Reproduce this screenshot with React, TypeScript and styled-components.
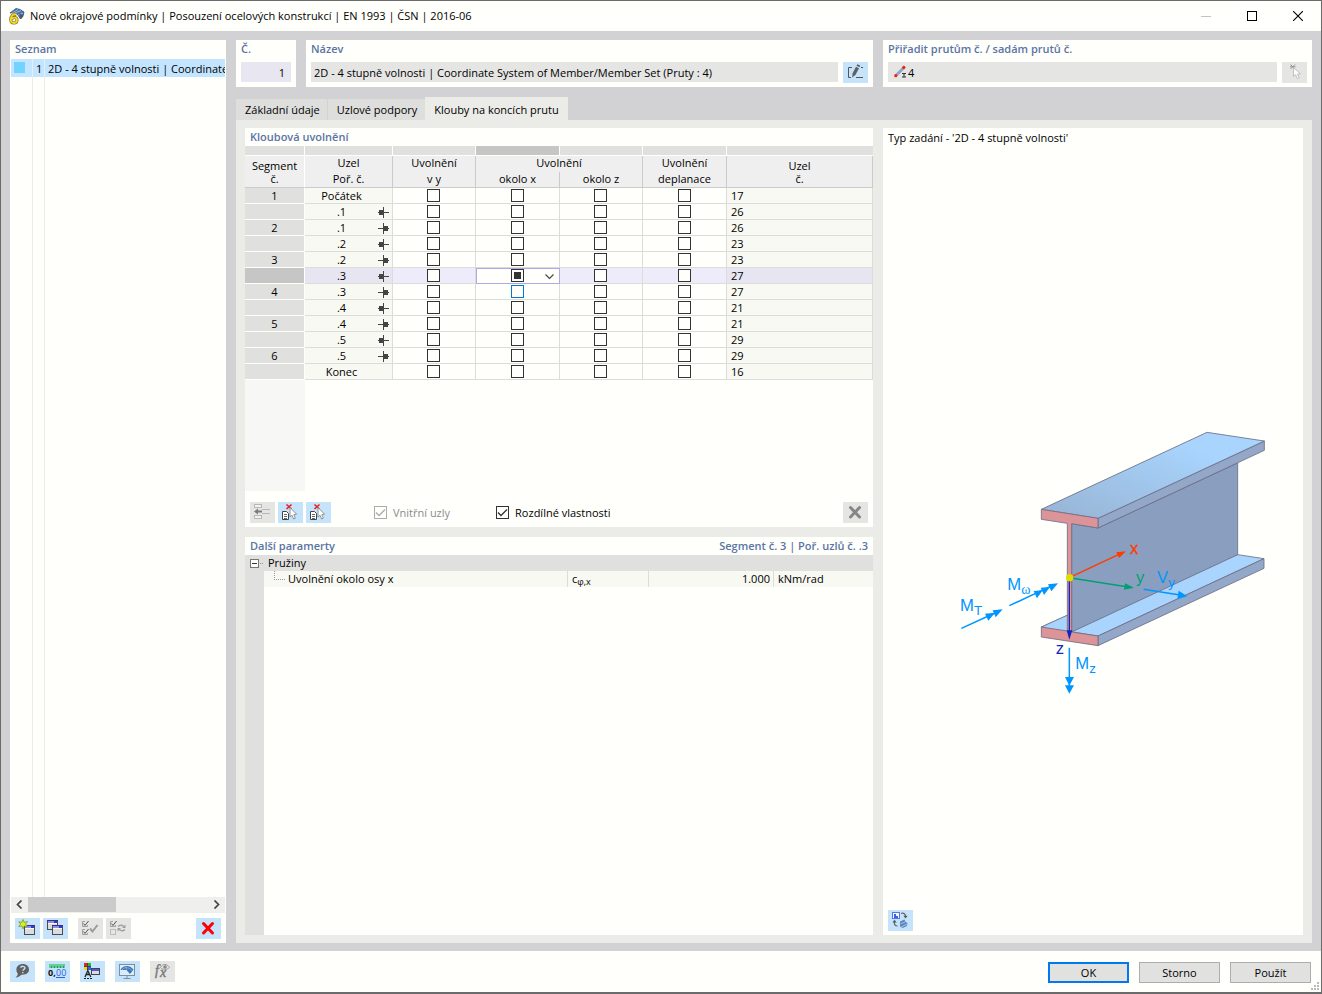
import React from 'react';
import styled, { createGlobalStyle, css } from 'styled-components';

const c = {
  white: '#fffffc',
  frame: '#6b6b6b',
  body: '#d2d2d5',
  page: '#ebece8',
  tab: '#dededd',
  head: '#efefef',
  strip: '#e0e0df',
  line: '#dcdcd8',
  headLine: '#cbcbcb',
  readOnly: '#f8f9f2',
  title: '#5a74a4',
  blue: '#c5e3fa',
  grey: '#e5e5e4',
  text: '#000000',
};

const Global = createGlobalStyle`
  * { box-sizing: border-box; }
  body { margin: 0; background: ${c.frame}; }
  body, button, input, table {
    font-family: "Open Sans", "Noto Sans", sans-serif;
    font-size: 11px;
    line-height: 16px;
    color: ${c.text};
  }
`;

const Window = styled.div`
  display: flex;
  flex-direction: column;
  min-height: 100vh;
  border: 1px solid ${c.frame};
  border-bottom-width: 2px;
  background: ${c.white};
`;

const TitleBar = styled.header`
  display: flex;
  align-items: center;
  height: 30px;
  padding-left: 7px;
`;

const WindowTitle = styled.h1`
  flex: 1;
  margin: 0 0 0 5px;
  font-size: 11px;
  font-weight: 400;
  white-space: nowrap;
`;

const CaptionButton = styled.button`
  display: grid;
  place-items: center;
  width: 46px;
  height: 29px;
  padding: 0;
  border: 0;
  background: none;
`;

const Main = styled.main`
  flex: 1;
  display: grid;
  grid-template-columns: 216px minmax(0, 1fr);
  column-gap: 10px;
  padding: 9px 9px 8px;
  background: ${c.body};
`;

const Panel = styled.section`
  display: flex;
  flex-direction: column;
  min-width: 0;
  background: ${c.white};
`;

const PanelHead = styled.div<{ $tall?: boolean }>`
  display: flex;
  justify-content: space-between;
  height: ${p => (p.$tall ? 19 : 18)}px;
  padding: 1px 5px;
`;

const PanelTitle = styled.h2`
  margin: 0;
  font-size: 11px;
  font-weight: 600;
  color: ${c.title};
  white-space: nowrap;
`;

const ListBody = styled.ul`
  flex: 1;
  margin: 0 1px;
  padding: 0;
  list-style: none;
  background: linear-gradient(${c.page}, ${c.page}) 21px 0 / 1px 100% no-repeat,
    linear-gradient(${c.page}, ${c.page}) 33px 0 / 1px 100% no-repeat;
`;

const ListRow = styled.li`
  display: grid;
  grid-template-columns: 22px 12px minmax(0, 1fr);
  height: 18px;
  line-height: 20px;
  background: #c3e5ff;
`;

const ListCell = styled.span`
  padding-left: 3px;
  overflow: hidden;
  white-space: nowrap;
  &:not(:last-child) { border-right: 1px solid #e3eff6; }
`;

const Swatch = styled.i`
  display: block;
  width: 11px;
  height: 11px;
  margin-top: 3px;
  background: #72d3ff;
`;

const ScrollBar = styled.div`
  display: grid;
  grid-template-columns: 17px minmax(0, 1fr) 17px;
  height: 16px;
  margin: 0 1px;
  background: #efefee;
`;

const ScrollArrow = styled.button`
  display: grid;
  place-items: center;
  padding: 0 0 1px;
  border: 0;
  background: none;
`;

const ScrollThumb = styled.div`
  width: 49%;
  height: 15px;
  background: #cbcbcb;
`;

const ToolRow = styled.div<{ $list?: boolean }>`
  display: flex;
  align-items: center;
  gap: 3px;
  padding: ${p => (p.$list ? 5 : 11)}px 5px 4px;
`;

const Spacer = styled.span<{ $w?: number }>`
  ${p => (p.$w ? css`width: ${p.$w}px;` : css`flex: 1;`)}
`;

const IconButton = styled.button<{ $off?: boolean }>`
  display: block;
  flex: none;
  width: 25px;
  height: 21px;
  padding: 0;
  border: 0;
  background: ${p => (p.$off ? c.grey : c.blue)};
  svg { display: block; }
`;

const Detail = styled.div`
  display: flex;
  flex-direction: column;
  min-width: 0;
`;

const Fields = styled.div`
  display: grid;
  grid-template-columns: 60px minmax(0, 1fr) 429px;
  gap: 10px;
`;

const FieldPanel = styled.div`
  height: 47px;
  padding: 1px 5px 4px;
  background: ${c.white};
`;

const FieldLabel = styled.label`
  display: block;
  height: 21px;
  font-weight: 600;
  color: ${c.title};
`;

const FieldRow = styled.div`
  display: flex;
  gap: 5px;
`;

const FieldBox = styled.div<{ $tint?: boolean }>`
  flex: 1;
  display: flex;
  align-items: center;
  min-width: 0;
  height: 20px;
  padding: 0 3px;
  background: ${p => (p.$tint ? '#e8e6f1' : c.grey)};
`;

const TextInput = styled.input<{ $right?: boolean }>`
  flex: 1;
  min-width: 0;
  padding: 2px 3px 0 0;
  border: 0;
  outline: 0;
  background: none;
  text-align: ${p => (p.$right ? 'right' : 'left')};
`;

const Tabs = styled.div`
  display: flex;
  align-items: flex-end;
  margin-top: 10px;
`;

const Tab = styled.button<{ $active?: boolean }>`
  height: ${p => (p.$active ? 23 : 21)}px;
  padding: ${p => (p.$active ? '3px 9px 0' : '0 8px 0 9px')};
  border: 0;
  background: ${p => (p.$active ? c.page : c.tab)};
  white-space: nowrap;
  &:first-child { border-right: 1px solid ${c.body}; padding-right: 7px; }
`;

const TabPage = styled.div`
  flex: 1;
  display: grid;
  grid-template-columns: minmax(0, 1fr) 420px;
  gap: 10px;
  padding: 8px 9px;
  background: ${c.page};
`;

const Stack = styled.div`
  display: grid;
  grid-template-rows: auto minmax(0, 1fr);
  gap: 10px;
  min-width: 0;
`;

const HingeArea = styled.div`
  min-height: 345px;
  background: linear-gradient(#f7f7f5, #f7f7f5) 0 0 / 60px 100% no-repeat;
`;

const HingeTable = styled.table`
  width: 100%;
  table-layout: fixed;
  border-collapse: separate;
  border-spacing: 0;
  text-align: center;
  background: ${c.white};
`;

const StripCell = styled.td<{ $on?: boolean }>`
  height: 10px;
  padding: 0;
  border-right: 1px solid ${c.white};
  border-bottom: 1px solid ${c.white};
  background: ${p => (p.$on ? '#c6c6c6' : c.strip)};
  &:last-child { border-right: 0; }
`;

const HeadCell = styled.th<{ $base?: boolean; $first?: boolean }>`
  height: 16px;
  padding: 0;
  font-weight: 400;
  line-height: ${p => (p.rowSpan === 2 ? 13 : 14)}px;
  vertical-align: ${p => (p.rowSpan === 2 ? 'middle' : 'top')};
  background: ${c.head};
  border-right: 1px solid ${c.headLine};
  border-bottom: ${p => (p.$base ? `1px solid ${c.headLine}` : 0)};
  ${p => p.$first && css`border-right-color: ${c.white};`}
`;

const Cell = styled.td<{ $ro?: boolean; $sel?: boolean; $left?: boolean; $check?: boolean }>`
  height: 16px;
  padding: 0 ${p => (p.$check ? 1 : 0)}px 0 ${p => (p.$left ? 4 : 0)}px;
  line-height: 15px;
  text-align: ${p => (p.$left ? 'left' : 'center')};
  border-right: 1px solid ${c.line};
  border-bottom: 1px solid ${c.line};
  background: ${p =>
    p.$sel ? (p.$ro ? '#e7e5f1' : '#eeebfb') : p.$ro ? c.readOnly : c.white};
`;

const SegmentCell = styled.th<{ $sel?: boolean }>`
  height: 16px;
  padding: 0;
  font-weight: 400;
  line-height: 15px;
  border-right: 1px solid ${c.white};
  border-bottom: 1px solid ${c.white};
  background: ${p => (p.$sel ? '#c6c6c6' : c.strip)};
`;

const EditCell = styled(Cell)`
  border: 1px solid #b3a5e6;
  background: ${c.white};
`;

const EditLayout = styled.div`
  display: grid;
  grid-template-columns: minmax(0, 1fr) 13px minmax(0, 1fr);
  height: 14px;
`;

const DropButton = styled.button`
  display: grid;
  place-items: center;
  justify-self: end;
  width: 17px;
  height: 14px;
  padding: 0;
  border: 0;
  background: none;
`;

const NodeLayout = styled.div`
  display: grid;
  grid-template-columns: minmax(0, 1fr) 14px;
  height: 15px;
  svg { margin-top: 3px; }
`;

const Check = styled.input<{ $hot?: boolean; $mixed?: boolean }>`
  appearance: none;
  display: block;
  flex: none;
  width: 13px;
  height: 13px;
  margin: 0 auto;
  border: 1px solid ${p => (p.$hot ? '#0078d7' : '#333333')};
  background: ${p => (p.$mixed ? '#333333' : c.white)};
  ${p => p.$mixed && css`box-shadow: inset 0 0 0 2px ${c.white};`}
  &:checked {
    background: ${c.white}
      url("data:image/svg+xml,%3Csvg xmlns='http://www.w3.org/2000/svg' width='11' height='11'%3E%3Cpath d='M1 5.5 L4 8.5 L10 2.5' fill='none' stroke='%23333' stroke-width='1.3'/%3E%3C/svg%3E");
  }
  &:disabled { opacity: 0.4; }
`;

const CheckLabel = styled.label<{ $off?: boolean }>`
  display: flex;
  align-items: center;
  gap: 6px;
  color: ${p => (p.$off ? '#8c8c8c' : c.text)};
  white-space: nowrap;
`;

const ParamArea = styled.div`
  flex: 1;
  background: linear-gradient(${c.strip}, ${c.strip}) 0 0 / 19px 100% no-repeat;
`;

const ParamTable = styled.table`
  width: 100%;
  table-layout: fixed;
  border-collapse: separate;
  border-spacing: 0;
`;

const ParamCell = styled.td<{ $group?: boolean; $gutter?: boolean; $right?: boolean }>`
  height: 16px;
  padding: 0 ${p => (p.$right ? 3 : 4)}px 0 4px;
  line-height: 16px;
  white-space: nowrap;
  text-align: ${p => (p.$right ? 'right' : 'left')};
  background: ${p => (p.$group || p.$gutter ? c.strip : c.readOnly)};
  border-right: ${p => (p.$group || p.$gutter ? 0 : `1px solid ${c.line}`)};
  &:last-child { border-right: 0; }
`;

const TreeItem = styled.span<{ $leaf?: boolean }>`
  display: flex;
  align-items: center;
  gap: ${p => (p.$leaf ? 3 : 0)}px;
  padding-left: ${p => (p.$leaf ? 5 : 1)}px;
  height: 16px;
`;

const ToggleButton = styled.button`
  display: block;
  height: 9px;
  padding: 0;
  margin-right: 4px;
  border: 0;
  background: none;
  svg { display: block; }
`;

const SymbolText = styled.span`
  sub { font-size: 9px; line-height: 1; vertical-align: -2px; }
`;

const PreviewText = styled.p`
  margin: 0;
  padding: 2px 5px 4px;
`;

const PreviewCanvas = styled.div`
  flex: 1;
  display: grid;
  place-items: center;
  padding-top: 80px;
`;

const Footer = styled.footer`
  display: flex;
  align-items: flex-start;
  gap: 10px;
  height: 41px;
  padding: 10px 1px 0 9px;
`;

const DialogButton = styled.button<{ $primary?: boolean }>`
  width: 81px;
  height: 21px;
  margin-top: 1px;
  padding: 0;
  border: ${p => (p.$primary ? '2px solid #0078f0' : '1px solid #adadad')};
  background: #e1e1e0;
`;

const GripSlot = styled.span`
  align-self: flex-end;
  width: 9px;
  height: 9px;
  margin: 0 0 1px -10px;
  svg { display: block; }
`;

const AppIcon = () => (
  <svg width="17" height="17" viewBox="0 0 17 17">
    <path d="M2 5 L8 0.5 L12 1.5 L16 4 L15 8 L12.5 11 L8 4 Z" fill="#4a76b8" stroke="#2f4a78" strokeWidth="0.8" />
    <path d="M4 5 L10 1.5 M7 5 L13 2.5 M10 7 L15 5" stroke="#a9c4ea" strokeWidth="0.8" />
    <path d="M11 5 L15.5 8 L13 11 Z" fill="#555" />
    <path d="M8.5 6.5 C5 5.5 2.8 8 2.8 11.5 C2.8 14 4 15 5.8 15 C8 15 9 13.6 9 12 C9 10.4 8 9.6 6.5 9.6 C5 9.6 4 10.4 3.6 11.4" fill="none" stroke="#7b6a10" strokeWidth="3" />
    <path d="M8.5 6.5 C5 5.5 2.8 8 2.8 11.5 C2.8 14 4 15 5.8 15 C8 15 9 13.6 9 12 C9 10.4 8 9.6 6.5 9.6 C5 9.6 4 10.4 3.6 11.4" fill="none" stroke="#efd92c" strokeWidth="1.8" />
  </svg>
);

const Svg = ({ children }: { children: React.ReactNode }) => (
  <svg width="25" height="21" viewBox="0 0 25 21">{children}</svg>
);

const MiniWindow = ({ x, y }: { x: number; y: number }) => (
  <g>
    <rect x={x + 0.5} y={y + 0.5} width="10" height="9" fill="#dcdcdc" stroke="#4b4b4b" />
    <rect x={x + 1} y={y + 3} width="9" height="1" fill="#fafafa" />
    <rect x={x} y={y} width="11" height="1" fill="#33337a" />
    <rect x={x + 1} y={y + 1} width="6" height="2" fill="#8c8cf4" />
    <rect x={x + 7} y={y + 1} width="3" height="2" fill="#3434e0" />
  </g>
);

const NewIcon = () => (
  <Svg>
    <MiniWindow x={9} y={7} />
    <path d="M8 1.5 L9.2 4.3 L12.6 3.6 L10.6 6 L12.6 8.4 L9.2 8 L8 11 L6.9 8 L3.8 8.6 L5.6 6 L3.8 3.8 L6.9 4.3 Z" fill="#d9ee1c" stroke="#6f8f28" strokeWidth="0.7" />
  </Svg>
);
const CopyIcon = () => (<Svg><MiniWindow x={4} y={2} /><MiniWindow x={9} y={7} /></Svg>);

const CheckAllIcon = () => (
  <Svg>
    <g fill="none" stroke="#a0a0a0">
      <path d="M7 3.5 H4.5 V8.5 H9.5 V7" />
      <path d="M7 11.5 H4.5 V16.5 H9.5 V15" />
      <path d="M5.5 5.5 L7 7.5 L10.5 3 M5.5 13.5 L7 15.5 L10.5 11" stroke="#555" />
      <path d="M12 10.5 L14.5 13.5 L19.5 7" stroke="#9b9b9b" strokeWidth="2" />
    </g>
  </Svg>
);
const CheckSwapIcon = () => (
  <Svg>
    <g fill="none" stroke="#a0a0a0">
      <path d="M7 3.5 H4.5 V8.5 H9.5 V7" />
      <path d="M5.5 5.5 L7 7.5 L10.5 3" stroke="#555" />
      <rect x="4.5" y="11.5" width="5" height="5" stroke="#bcbcbc" />
      <path d="M12 8.5 C14 6.5 16 7 18 8.5 M19 11.5 C17 13.5 15 13 13 11.5" stroke="#a0a0a0" strokeWidth="1.5" />
    </g>
    <path d="M19.5 6.5 V10 H16 Z M11.5 13.5 V10 H15 Z" fill="#a0a0a0" />
  </Svg>
);
const CrossIcon = ({ color }: { color: string }) => (
  <Svg>
    <path d="M7.5 5.5 L16.5 15 M16.5 5.5 L7.5 15" stroke={color} strokeWidth="3" strokeLinecap="round" />
  </Svg>
);
const HelpIcon = () => (
  <Svg>
    <path d="M12.8 3 C16.6 3 19 5.4 19 8.6 C19 11.8 16.4 13.8 12.6 13.8 L11.3 13.8 C10 15.2 8.5 16.4 5.5 16.6 C7.2 15.4 7.6 14.3 7.8 12.6 C6.8 11.6 6.4 10.2 6.4 8.6 C6.4 5.4 9 3 12.8 3 Z" fill="#606060" />
    <path d="M10.7 6.8 C10.9 4.8 15 4.8 14.9 7 C14.9 8.3 13 8.4 12.9 9.7 M12.8 11 V12.2" fill="none" stroke="#c5e3fa" strokeWidth="1.4" />
  </Svg>
);
const UnitsIcon = () => (
  <Svg>
    <rect x="4" y="3" width="16" height="4" fill="#62d093" />
    <path d="M6.5 5 V7 M9.5 5 V7 M12.5 5 V7 M15.5 5 V7 M18.5 5 V7" stroke="#2e8f5c" />
    <text x="3" y="15" fontFamily="Open Sans, sans-serif" fontSize="9" fontWeight="700" fill="#111">0,</text>
    <text x="11" y="15" fontFamily="Open Sans, sans-serif" fontSize="9" fill="#2f5fe0">00</text>
    <path d="M11 16.5 H20" stroke="#2f5fe0" />
  </Svg>
);
const DisplayIcon = () => (
  <Svg>
    <rect x="4" y="2" width="7" height="7" fill="#444" />
    <rect x="4" y="2" width="3" height="3" fill="#f02020" />
    <rect x="8" y="2" width="3" height="3" fill="#20c020" />
    <rect x="4" y="6" width="3" height="3" fill="#f0d020" />
    <rect x="8" y="6" width="3" height="3" fill="#3060f0" />
    <path d="M5 16 L7.8 9.5 L10.8 16 M6 13.5 H10" fill="none" stroke="#222" strokeWidth="1.3" />
    <path d="M4 17.5 H12" stroke="#222" strokeDasharray="2 1" />
    <rect x="11.5" y="7.5" width="8" height="6" fill="#dcdcdc" stroke="#444" />
    <rect x="12" y="8" width="7" height="2" fill="#5252ee" />
  </Svg>
);
const MonitorIcon = () => (
  <Svg>
    <rect x="4.5" y="3.5" width="15" height="11" fill="#d8ecfb" stroke="#7d8f9c" />
    <path d="M5.5 9 C7.5 4.5 14 3 18.5 8.5 L15 13 L11.5 9 Z" fill="#3f74b5" />
    <path d="M7 9 C9 6 13 5.5 17 9.5 M12 9 L10.5 5.5" fill="none" stroke="#9bc0e6" strokeWidth="0.7" />
    <path d="M12 14.5 V17 M8.5 17.5 H15.5" stroke="#7d8f9c" />
  </Svg>
);
const FormulaIcon = () => (
  <Svg>
    <text x="5" y="14" fontFamily="Liberation Serif, serif" fontStyle="italic" fontSize="14" fill="#777" stroke="#777" strokeWidth="0.4">f</text>
    <text x="10" y="16" fontFamily="Liberation Serif, serif" fontStyle="italic" fontSize="14" fill="#777" stroke="#777" strokeWidth="0.4">x</text>
    <path d="M10.5 6.5 C12.5 2.5 17 2.5 19.5 6.5 C17 9 12.5 9 10.5 6.5 Z" fill="none" stroke="#999" />
    <circle cx="15" cy="6" r="1.8" fill="#888" />
  </Svg>
);
const EditIcon = () => (
  <Svg>
    <path d="M9 5.5 H5.5 V15.5 H8 M18 5.5 H20 M13 15.5 H20" fill="none" stroke="#555" />
    <path d="M9.6 11.2 L13 4.8 L16 6.2 L12.6 12.8 L9.2 15.4 Z" fill="#606060" />
    <path d="M13.5 3.8 L14.4 2.2 L17.2 3.6 L16.5 5.2 Z" fill="#606060" />
  </Svg>
);
const PickIcon = () => (
  <Svg>
    <path d="M8.5 2.5 L13 7 M13 2.5 L8.5 7 M8 4.7 H13.5" stroke="#8f8f8f" strokeWidth="0.9" />
    <path d="M11.5 5.5 V14.5 L13.6 12.8 L15.4 16.6 L17.3 15.8 L15.5 12 L18.4 11.8 Z" fill="#fbfbfb" stroke="#b5b5b5" strokeWidth="0.8" />
  </Svg>
);
const DeletePickIcon = () => (
  <Svg>
    <path d="M4.5 9.5 H8.5 L10.5 11.5 V17.5 H4.5 Z" fill="#fff" stroke="#444" />
    <path d="M6 12.5 H9 M6 14.5 H9 M6 16.5 H9" stroke="#666" />
    <path d="M8.5 2.5 L13.5 7 M13.5 2.5 L8.5 7" stroke="#f01818" strokeWidth="1.5" />
    <path d="M12 5.5 V15 L14 13.2 L15.6 17 L17.4 16.2 L15.8 12.6 L18.6 12.2 Z" fill="#fdfdfd" stroke="#8a8a8a" strokeWidth="0.9" />
  </Svg>
);
const InsertRowIcon = () => (
  <Svg>
    <g fill="none" stroke="#b8b8b8">
      <rect x="4.5" y="2.5" width="7" height="3" fill="#f2f2f2" />
      <rect x="4.5" y="13.5" width="7" height="3" fill="#f2f2f2" />
      <path d="M12 7.5 H20 M12 11.5 H20" />
    </g>
    <path d="M4 9.5 L8 6.5 V8.5 H12 V10.5 H8 V12.5 Z" fill="#7c7c7c" />
  </Svg>
);
const ViewSwapIcon = () => (
  <Svg>
    <rect x="4.5" y="2.5" width="7" height="6" fill="#f4f8ff" stroke="#5377ee" />
    <path d="M6 4 H8 V6 H10 V8 H6 Z" fill="#3f62e0" />
    <path d="M13 3.5 C16 2.5 17.5 4 17.5 6.5 M6.5 11.5 C6 14.5 7 16 9.5 16" fill="none" stroke="#666" strokeWidth="1.2" />
    <path d="M15.4 5.8 H19.6 L17.5 8.4 Z M4.5 12.5 H8.7 L6.5 9.8 Z" fill="#555" />
    <path d="M12 11.5 L16.5 9.5 L17.5 12 L19.5 13 L19 16 L14.5 18 L12 16.5 Z" fill="#5a86bf" />
    <path d="M12.5 13.8 L17 12 M13 17 L19 14.2" stroke="#b7d2f0" strokeWidth="0.8" />
  </Svg>
);
const MemberIcon = () => (
  <svg width="14" height="14" viewBox="0 0 14 14">
    <path d="M2.5 10 L9.5 3" stroke="#8fa6c8" strokeWidth="3" />
    <circle cx="1.8" cy="10.7" r="1.6" fill="#f02010" />
    <circle cx="9.8" cy="2.4" r="1.6" fill="#f02010" />
    <path d="M8 8.5 H12 M10 8.5 V12 M8 12 H12" stroke="#333" strokeWidth="1.1" />
  </svg>
);

const NodeIcon = ({ side }: { side: 'L' | 'R' }) => (
  <svg width="11" height="11" viewBox="0 0 11 11">
    <path d="M5.5 0 V11 M0 5.5 H11" stroke="#444" />
    <rect x={side === 'L' ? 1 : 5} y="3" width="5" height="5" fill="#444" />
  </svg>
);

const Chevron = ({ d, thin }: { d: string; thin?: boolean }) => (
  <svg width="9" height="9" viewBox="0 0 9 9">
    <path d={d} fill="none" stroke="#444" strokeWidth={thin ? 1.1 : 1.7} />
  </svg>
);

const Grip = () => (
  <svg width="9" height="9" viewBox="0 0 9 9" fill="#b9b9b9">
    <path d="M6 0h2v2h-2z M3 3h2v2h-2z M6 3h2v2h-2z M0 6h2v2h-2z M3 6h2v2h-2z M6 6h2v2h-2z" />
  </svg>
);

const BeamDrawing = () => (
  <svg width="374" height="290" viewBox="-102 0 1122 870" fontFamily="Liberation Sans, sans-serif">
    <defs>
      <linearGradient id="flange" x1="0" y1="1" x2="1" y2="0">
        <stop offset="0" stopColor="#97b3d3" />
        <stop offset="0.75" stopColor="#a8d4fd" />
      </linearGradient>
    </defs>
    <g stroke="#6c6c86" strokeWidth="2.5" strokeLinejoin="round">
      <path d="M304 621 L475 545 L893 404 L972 416 L474 648 Z" fill="#a8d4fd" />
      <path d="M474 648 L972 416 L972 445 L474 677 Z" fill="#93a7c9" />
      <path d="M395 311 L474 324 L893 129 L893 404 L395 636 Z" fill="#8a9fc0" />
      <path d="M304 621 L380 586 L395 636 Z" fill="#a8d4fd" stroke="none" />
      <path d="M304 621 L381 586" fill="none" />
      <path d="M474 295 L973 63 L973 91 L474 324 Z" fill="#93a7c9" />
      <path d="M304 268 L801 37 L973 63 L474 295 Z" fill="url(#flange)" />
      <path d="M304 268 L474 295 L474 324 L395 311 L395 636 L474 648 L474 677 L304 651 L304 621 L382 633 L382 310 L304 298 Z" fill="#dc9498" />
    </g>
    <g fill="none" strokeWidth="4.5">
      <path d="M388 473 L535 404" stroke="#ff3c00" />
      <path d="M388 473 L560 500" stroke="#00a070" />
      <path d="M388 473 V635" stroke="#1226c0" strokeWidth="4" />
      <path d="M611 508 L720 525 M64 625 L165 579 M208 557 L330 500 M388 683 V800" stroke="#0096ff" />
    </g>
    <path d="M558 394 L529 397 L537 414 Z" fill="#ff3c00" />
    <path d="M582 503 L552 509 L555 490 Z" fill="#00a070" />
    <path d="M388 659 L380 631 H397 Z" fill="#1226c0" />
    <g fill="#0096ff">
      <path d="M742 529 L712 537 L716 512 Z" />
      <path d="M188 568 L158 571 L167 592 Z M165 578 L135 581 L145 602 Z" />
      <path d="M354 490 L324 493 L334 514 Z M330 501 L302 503 L312 525 Z M308 511 L281 513 L291 535 Z" />
      <path d="M388 821 L375 796 H402 Z M388 797 L375 771 H402 Z" />
    </g>
    <circle cx="389" cy="473" r="11" fill="#e0dc00" />
    <text x="570" y="402" fontSize="50" fill="#ff3c00" stroke="#ff3c00">x</text>
    <text x="588" y="489" fontSize="50" fill="#00a070">y</text>
    <text x="347" y="703" fontSize="50" fill="#1226c0">z</text>
    <g fill="#0096ff">
      <text x="651" y="490" fontSize="50">V<tspan dy="10" fontSize="40">y</tspan></text>
      <text x="60" y="574" fontSize="50">M<tspan dy="10" fontSize="40">T</tspan></text>
      <text x="202" y="511" fontSize="50">M<tspan dy="10" fontSize="42" fontFamily="Liberation Serif, serif">ω</tspan></text>
      <text x="406" y="748" fontSize="50">M<tspan dy="10" fontSize="40">z</tspan></text>
    </g>
  </svg>
);

type Hinge = { seg: string; label: string; side?: 'L' | 'R'; node: string };
const hinges: Hinge[] = [
  { seg: '1', label: 'Počátek', node: '17' },
  { seg: '', label: '.1', side: 'L', node: '26' },
  { seg: '2', label: '.1', side: 'R', node: '26' },
  { seg: '', label: '.2', side: 'L', node: '23' },
  { seg: '3', label: '.2', side: 'R', node: '23' },
  { seg: '', label: '.3', side: 'L', node: '27' },
  { seg: '4', label: '.3', side: 'R', node: '27' },
  { seg: '', label: '.4', side: 'L', node: '21' },
  { seg: '5', label: '.4', side: 'R', node: '21' },
  { seg: '', label: '.5', side: 'L', node: '29' },
  { seg: '6', label: '.5', side: 'R', node: '29' },
  { seg: '', label: 'Konec', node: '16' },
];
const selectedRow = 5;
const releases = ['Uvolnění v y', 'Uvolnění okolo x', 'Uvolnění okolo z', 'Uvolnění deplanace'];

const HingeRow = ({ hinge, index }: { hinge: Hinge; index: number }) => {
  const sel = index === selectedRow;
  return (
    <tr>
      <SegmentCell scope="row" $sel={sel}>{hinge.seg}</SegmentCell>
      <Cell $ro $sel={sel}>
        <NodeLayout>
          <span>{hinge.label}</span>
          {hinge.side && <NodeIcon side={hinge.side} />}
        </NodeLayout>
      </Cell>
      {releases.map((name, col) =>
        sel && col === 1 ? (
          <EditCell key={name} $check>
            <EditLayout>
              <span />
              <Check type="checkbox" $mixed aria-label={name} />
              <DropButton aria-label="Možnosti"><Chevron thin d="M0.5 2.5 L4.5 6.5 L8.5 2.5" /></DropButton>
            </EditLayout>
          </EditCell>
        ) : (
          <Cell key={name} $sel={sel} $check>
            <Check type="checkbox" $hot={index === selectedRow + 1 && col === 1} aria-label={name} />
          </Cell>
        ),
      )}
      <Cell $ro $sel={sel} $left>{hinge.node}</Cell>
    </tr>
  );
};

const HingePanel = () => (
  <Panel>
    <PanelHead><PanelTitle>Kloubová uvolnění</PanelTitle></PanelHead>
    <HingeArea>
      <HingeTable>
        <colgroup>
          <col width="60" /><col width="88" /><col width="83" /><col width="84" />
          <col width="83" /><col width="84" /><col />
        </colgroup>
        <thead>
          <tr>
            <StripCell /><StripCell /><StripCell /><StripCell $on /><StripCell /><StripCell /><StripCell />
          </tr>
          <tr>
            <HeadCell rowSpan={2} $base $first>Segment<br />č.</HeadCell>
            <HeadCell>Uzel</HeadCell>
            <HeadCell>Uvolnění</HeadCell>
            <HeadCell colSpan={2}>Uvolnění</HeadCell>
            <HeadCell>Uvolnění</HeadCell>
            <HeadCell rowSpan={2} $base>Uzel<br />č.</HeadCell>
          </tr>
          <tr>
            <HeadCell $base>Poř. č.</HeadCell>
            <HeadCell $base>v y</HeadCell>
            <HeadCell $base>okolo x</HeadCell>
            <HeadCell $base>okolo z</HeadCell>
            <HeadCell $base>deplanace</HeadCell>
          </tr>
        </thead>
        <tbody>
          {hinges.map((h, i) => <HingeRow key={i} hinge={h} index={i} />)}
        </tbody>
      </HingeTable>
    </HingeArea>
    <ToolRow>
      <IconButton $off aria-label="Vložit řádek"><InsertRowIcon /></IconButton>
      <IconButton aria-label="Odstranit výběr"><DeletePickIcon /></IconButton>
      <IconButton aria-label="Odstranit vše"><DeletePickIcon /></IconButton>
      <Spacer $w={37} />
      <CheckLabel $off><Check type="checkbox" defaultChecked disabled />Vnitřní uzly</CheckLabel>
      <Spacer $w={40} />
      <CheckLabel><Check type="checkbox" defaultChecked />Rozdílné vlastnosti</CheckLabel>
      <Spacer />
      <IconButton $off aria-label="Smazat"><CrossIcon color="#868686" /></IconButton>
    </ToolRow>
  </Panel>
);

const ParamPanel = () => (
  <Panel>
    <PanelHead>
      <PanelTitle>Další paramerty</PanelTitle>
      <PanelTitle>Segment č. 3 | Poř. uzlů č. .3</PanelTitle>
    </PanelHead>
    <ParamArea>
      <ParamTable>
        <colgroup>
          <col width="19" /><col width="304" /><col width="81" /><col width="125" /><col />
        </colgroup>
        <tbody>
          <tr>
            <ParamCell $group colSpan={5}>
              <TreeItem>
                <ToggleButton aria-label="Sbalit">
                  <svg width="14" height="9" viewBox="0 0 14 9">
                    <rect x="0.5" y="0.5" width="8" height="8" fill="#fffffc" stroke="#777" />
                    <path d="M2 4.5 H7" stroke="#333" />
                    <path d="M10 4.5 H14" stroke="#999" strokeDasharray="1 1" />
                  </svg>
                </ToggleButton>
                Pružiny
              </TreeItem>
            </ParamCell>
          </tr>
          <tr>
            <ParamCell $gutter />
            <ParamCell>
              <TreeItem $leaf>
                <svg width="12" height="16" viewBox="0 0 12 16">
                  <path d="M1.5 0 V8 M1 8.5 H12" fill="none" stroke="#999" strokeDasharray="1 1" />
                </svg>
                Uvolnění okolo osy x
              </TreeItem>
            </ParamCell>
            <ParamCell><SymbolText>c<sub>φ,x</sub></SymbolText></ParamCell>
            <ParamCell $right>1.000</ParamCell>
            <ParamCell>kNm/rad</ParamCell>
          </tr>
        </tbody>
      </ParamTable>
    </ParamArea>
  </Panel>
);

export default function App() {
  return (
    <>
      <Global />
      <Window>
        <TitleBar>
          <AppIcon />
          <WindowTitle>Nové okrajové podmínky | Posouzení ocelových konstrukcí | EN 1993 | ČSN | 2016-06</WindowTitle>
          <CaptionButton aria-label="Minimalizovat" disabled>
            <svg width="10" height="10"><path d="M0 5.5 H10" stroke="#c4c4c4" /></svg>
          </CaptionButton>
          <CaptionButton aria-label="Maximalizovat">
            <svg width="10" height="10"><rect x="0.5" y="0.5" width="9" height="9" fill="none" stroke="#000" /></svg>
          </CaptionButton>
          <CaptionButton aria-label="Zavřít">
            <svg width="10" height="10"><path d="M0 0 L10 10 M10 0 L0 10" stroke="#000" strokeWidth="1.1" /></svg>
          </CaptionButton>
        </TitleBar>

        <Main>
          <Panel>
            <PanelHead $tall><PanelTitle>Seznam</PanelTitle></PanelHead>
            <ListBody>
              <ListRow>
                <ListCell><Swatch /></ListCell>
                <ListCell>1</ListCell>
                <ListCell>2D - 4 stupně volnosti | Coordinate System of Member/Member Set (Pruty : 4)</ListCell>
              </ListRow>
            </ListBody>
            <ScrollBar>
              <ScrollArrow aria-label="Doleva"><Chevron d="M6.5 0.5 L2.5 4.5 L6.5 8.5" /></ScrollArrow>
              <ScrollThumb />
              <ScrollArrow aria-label="Doprava"><Chevron d="M2.5 0.5 L6.5 4.5 L2.5 8.5" /></ScrollArrow>
            </ScrollBar>
            <ToolRow $list>
              <IconButton aria-label="Nový"><NewIcon /></IconButton>
              <IconButton aria-label="Kopírovat"><CopyIcon /></IconButton>
              <Spacer $w={4} />
              <IconButton $off aria-label="Vybrat vše"><CheckAllIcon /></IconButton>
              <IconButton $off aria-label="Invertovat výběr"><CheckSwapIcon /></IconButton>
              <Spacer />
              <IconButton aria-label="Smazat"><CrossIcon color="#ff0000" /></IconButton>
            </ToolRow>
          </Panel>

          <Detail>
            <Fields>
              <FieldPanel>
                <FieldLabel htmlFor="number">Č.</FieldLabel>
                <FieldBox $tint><TextInput id="number" $right defaultValue="1" /></FieldBox>
              </FieldPanel>
              <FieldPanel>
                <FieldLabel htmlFor="name">Název</FieldLabel>
                <FieldRow>
                  <FieldBox>
                    <TextInput id="name" defaultValue="2D - 4 stupně volnosti | Coordinate System of Member/Member Set (Pruty : 4)" />
                  </FieldBox>
                  <IconButton aria-label="Upravit název"><EditIcon /></IconButton>
                </FieldRow>
              </FieldPanel>
              <FieldPanel>
                <FieldLabel htmlFor="members">Přiřadit prutům č. / sadám prutů č.</FieldLabel>
                <FieldRow>
                  <FieldBox>
                    <Spacer $w={3} />
                    <MemberIcon />
                    <TextInput id="members" defaultValue="4" />
                  </FieldBox>
                  <IconButton $off aria-label="Vybrat pruty"><PickIcon /></IconButton>
                </FieldRow>
              </FieldPanel>
            </Fields>

            <Tabs role="tablist">
              <Tab role="tab">Základní údaje</Tab>
              <Tab role="tab">Uzlové podpory</Tab>
              <Tab role="tab" $active aria-selected>Klouby na koncích prutu</Tab>
            </Tabs>

            <TabPage>
              <Stack>
                <HingePanel />
                <ParamPanel />
              </Stack>
              <Panel>
                <PreviewText>Typ zadání - '2D - 4 stupně volnosti'</PreviewText>
                <PreviewCanvas><BeamDrawing /></PreviewCanvas>
                <ToolRow>
                  <IconButton aria-label="Přepnout zobrazení"><ViewSwapIcon /></IconButton>
                </ToolRow>
              </Panel>
            </TabPage>
          </Detail>
        </Main>

        <Footer>
          <IconButton aria-label="Nápověda"><HelpIcon /></IconButton>
          <IconButton aria-label="Jednotky"><UnitsIcon /></IconButton>
          <IconButton aria-label="Zobrazení"><DisplayIcon /></IconButton>
          <IconButton aria-label="Náhled"><MonitorIcon /></IconButton>
          <IconButton $off aria-label="Vzorce"><FormulaIcon /></IconButton>
          <Spacer />
          <DialogButton $primary>OK</DialogButton>
          <DialogButton>Storno</DialogButton>
          <DialogButton>Použít</DialogButton>
          <GripSlot><Grip /></GripSlot>
        </Footer>
      </Window>
    </>
  );
}
